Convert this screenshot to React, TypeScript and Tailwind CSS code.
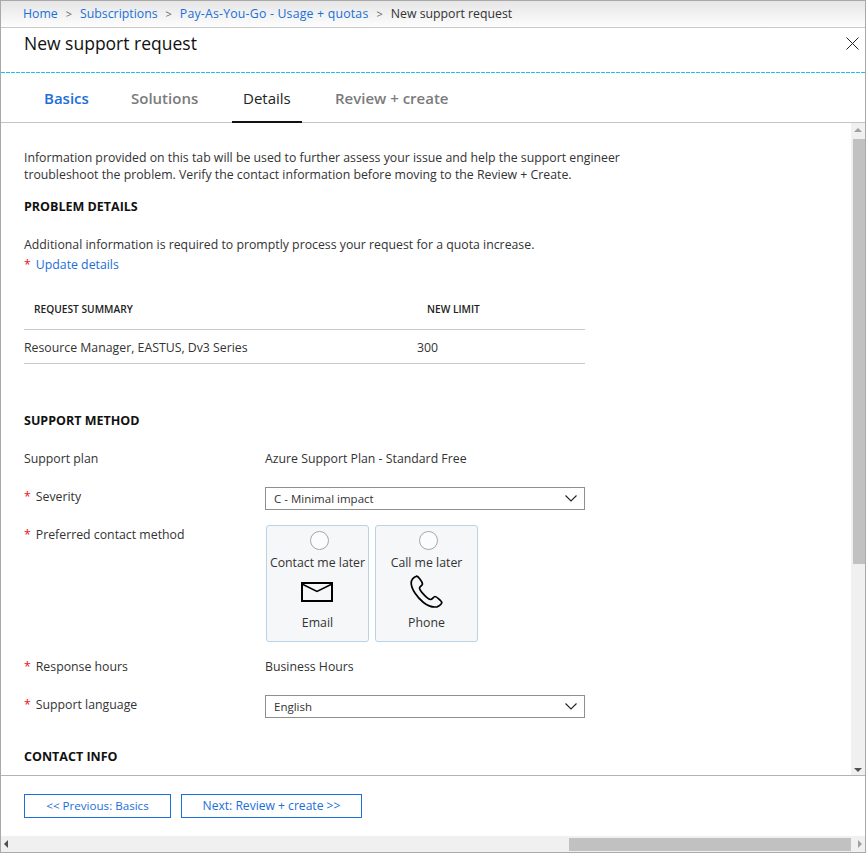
const Req = () => <span className="text-[#e81123] mr-[5px]">*</span>;

const Chevron = () => (
  <svg width="12" height="7" viewBox="0 0 12 7" fill="none" stroke="#222" strokeWidth="1.1">
    <path d="M0.5 0.5 L6 6 L11.5 0.5" />
  </svg>
);

const Select = ({ value }: { value: string }) => (
  <div className="w-[320px] h-[23px] -mt-[1px] border border-[#8f8f8f] flex items-center justify-between pl-[8px] pr-[7px] text-[11.5px] text-[#333]">
    <span>{value}</span>
    <Chevron />
  </div>
);

const Tile = ({ top, bottom, icon }: { top: string; bottom: string; icon: React.ReactNode }) => (
  <div className="w-[103px] h-[117px] rounded-[3px] border border-[#b9d3e6] bg-[#f6f7f9] flex flex-col items-center pt-[5px] text-[12.3px] text-[#333]">
    <div className="w-[19px] h-[19px] ml-[3px] rounded-full border border-[#a6a6a6] bg-white/60 shrink-0" />
    <div className="mt-[4px] leading-[18px] whitespace-nowrap">{top}</div>
    <div className="h-[37px] mt-[1px] flex items-center justify-center shrink-0">{icon}</div>
    <div className="mt-[4px] leading-[18px]">{bottom}</div>
  </div>
);

const Row = ({ label, req, children, className }: { label: string; req?: boolean; children: React.ReactNode; className?: string }) => (
  <div className={`flex ${className ?? ""}`}>
    <div className="w-[241px] shrink-0 leading-[18px]">
      {req && <Req />}
      {label}
    </div>
    {children}
  </div>
);

export default function App() {
  return (
    <div className="w-[866px] h-[853px] flex flex-col border border-[#a9a9a9] bg-white overflow-hidden text-[12.3px] text-[#333] font-['Open_Sans','Noto_Sans',sans-serif]">
      <div className="h-[27px] shrink-0 flex items-center pl-[22px] pt-[1px] bg-gradient-to-b from-[#e6e6e6] to-[#fdfdfd] border-b border-[#c8c8c8]">
        <span className="text-[#1a6fd8]">Home</span>
        <span className="mx-[8px] text-[#666] text-[11px]">&gt;</span>
        <span className="text-[#1a6fd8]">Subscriptions</span>
        <span className="mx-[8px] text-[#666] text-[11px]">&gt;</span>
        <span className="text-[#1a6fd8] tracking-[0.2px]">Pay-As-You-Go - Usage + quotas</span>
        <span className="mx-[8px] text-[#666] text-[11px]">&gt;</span>
        <span>New support request</span>
      </div>

      <div className="h-[44px] shrink-0 flex items-start justify-between pl-[23px] pr-[6px]">
        <div className="text-[17.5px] leading-[30px] text-[#111]">New support request</div>
        <svg width="13" height="13" viewBox="0 0 13 13" stroke="#222" strokeWidth="1" className="mt-[9px]">
          <path d="M0.5 0.5 L12.5 12.5 M12.5 0.5 L0.5 12.5" />
        </svg>
      </div>
      <div className="h-px shrink-0 bg-[repeating-linear-gradient(90deg,#19c3ee_0,#19c3ee_4px,transparent_4px,transparent_5px)]" />

      <div className="h-[50px] shrink-0 flex border-b border-[#c4c4c4] pl-[43px] text-[15px] font-semibold">
        <div className="pt-[14px] text-[#1a6fd8] w-[87px]">Basics</div>
        <div className="pt-[14px] text-[#7b7b7b] w-[112px]">Solutions</div>
        <div className="relative pt-[14px] text-[#222] font-medium w-[92px]">
          Details
          <div className="absolute left-[-11px] w-[70px] bottom-[-1px] h-[2px] bg-[#111]" />
        </div>
        <div className="pt-[14px] text-[#7b7b7b]">Review + create</div>
      </div>

      <div className="flex-1 min-h-0 flex">
        <div className="flex-1 min-w-0 overflow-hidden pl-[23px] pt-[26px]">
          <p className="w-[620px] leading-[17px]">
            Information provided on this tab will be used to further assess your issue and help the support engineer troubleshoot the problem. Verify the contact information before moving to the Review + Create.
          </p>
          <h2 className="mt-[15px] font-bold text-[12.5px] leading-[18px] text-[#111]">PROBLEM DETAILS</h2>
          <p className="mt-[20px] leading-[18px]">Additional information is required to promptly process your request for a quota increase.</p>
          <p className="mt-[2px] leading-[18px]">
            <Req />
            <span className="text-[#1a6fd8]">Update details</span>
          </p>

          <div className="w-[561px] mt-[19px]">
            <div className="h-[37px] flex border-b border-[#c8c8c8] text-[10.2px] font-semibold text-[#222] pt-[9px]">
              <div className="w-[403px] pl-[10px]">REQUEST SUMMARY</div>
              <div>NEW LIMIT</div>
            </div>
            <div className="h-[34px] flex items-center border-b border-[#c8c8c8] pt-[3px]">
              <div className="w-[393px]">Resource Manager, EASTUS, Dv3 Series</div>
              <div>300</div>
            </div>
          </div>

          <h2 className="mt-[48px] font-bold text-[12.5px] leading-[18px] text-[#111]">SUPPORT METHOD</h2>
          <Row label="Support plan" className="mt-[20px]">
            <div className="leading-[18px]">Azure Support Plan - Standard Free</div>
          </Row>
          <Row label="Severity" req className="mt-[20px]">
            <Select value="C - Minimal impact" />
          </Row>
          <Row label="Preferred contact method" req className="mt-[16px]">
            <div className="flex gap-[6px] ml-[1px] -mt-[1px]">
              <Tile
                top="Contact me later"
                bottom="Email"
                icon={
                  <svg width="32" height="20" viewBox="0 0 32 20" fill="none" stroke="#000" strokeWidth="2" className="-ml-[2px]">
                    <rect x="1" y="1" width="30" height="18" />
                    <path d="M1 2 L16 9.5 L31 2" strokeWidth="1.5" />
                  </svg>
                }
              />
              <Tile
                top="Call me later"
                bottom="Phone"
                icon={
                  <svg width="33" height="33" viewBox="0 0 33 33" fill="none" stroke="#000" strokeWidth="1.7" strokeLinejoin="round">
                    <path d="M6.5 1.2 C4 2.2 1.2 4.5 1.2 8 C1.2 14 7 22 13.5 27.5 C18 31 23 32.5 27 31.8 C29.5 31.2 31.8 29 31.8 27.5 C31.8 26.5 26.5 21.5 25 21.5 C23.5 21.5 22.5 24.5 20.5 24.5 C17.5 24.5 9.5 15.5 9.5 13 C9.5 11.5 12.5 10.5 12.5 9 C12.5 7 8 1 6.5 1.2 Z" />
                  </svg>
                }
              />
            </div>
          </Row>
          <Row label="Response hours" req className="mt-[16px]">
            <div className="leading-[18px]">Business Hours</div>
          </Row>
          <Row label="Support language" req className="mt-[20px]">
            <Select value="English" />
          </Row>
          <h2 className="mt-[30px] font-bold text-[12.5px] leading-[18px] text-[#111]">CONTACT INFO</h2>
        </div>

        <div className="w-[14px] shrink-0 bg-[#f0f0f0] flex flex-col items-center pt-[5px] pb-[3px]">
          <div className="w-0 h-0 border-x-[4px] border-x-transparent border-b-[4px] border-b-[#a0a0a0]" />
          <div className="w-[12px] h-[425px] bg-[#c1c1c1] mt-[7px] ml-[1px]" />
          <div className="mt-auto w-0 h-0 border-x-[4px] border-x-transparent border-t-[4px] border-t-[#505050]" />
        </div>
      </div>

      <div className="h-[61px] shrink-0 border-t border-[#b4b4b4] flex items-start gap-[10px] pl-[23px] pt-[18px] text-[#1a6fd8]">
        <button className="w-[147px] h-[24px] border border-[#1a6fd8] flex items-center justify-center text-[11.6px]">&lt;&lt; Previous: Basics</button>
        <button className="w-[181px] h-[24px] border border-[#1a6fd8] flex items-center justify-center text-[12.1px]">Next: Review + create &gt;&gt;</button>
      </div>

      <div className="h-[16px] shrink-0 bg-[#f0f0f0] flex items-center">
        <div className="ml-[3px] w-0 h-0 border-y-[4px] border-y-transparent border-r-[4px] border-r-[#505050]" />
        <div className="ml-[561px] w-[282px] h-[13px] bg-[#c1c1c1]" />
        <div className="ml-[7px] w-0 h-0 border-y-[4px] border-y-transparent border-l-[4px] border-l-[#a0a0a0]" />
      </div>
    </div>
  );
}
